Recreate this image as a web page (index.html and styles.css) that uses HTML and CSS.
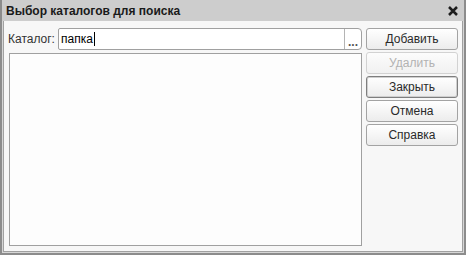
FILE: index.html
```html
<!DOCTYPE html>
<html lang="ru">
<head>
<meta charset="UTF-8">
<title>Выбор каталогов для поиска</title>
<link rel="stylesheet" href="styles.css">
</head>
<body>

<div class="window">
  <div class="titlebar">
    <span class="title">Выбор каталогов для поиска</span>
    <svg class="close" width="10" height="10" viewBox="0 0 10 10">
      <path d="M1 1 L9 9 M9 1 L1 9" stroke="#1e1e1e" stroke-width="2.5" fill="none"/>
    </svg>
  </div>
  <div class="body">
    <div class="main">
      <div class="row">
        <span class="label">Каталог:</span>
        <div class="field">
          <span class="value">папка<span class="caret"></span></span>
          <span class="choose">...</span>
        </div>
      </div>
      <div class="list"></div>
    </div>
    <div class="buttons">
      <div class="btn">Добавить</div>
      <div class="btn disabled">Удалить</div>
      <div class="btn default">Закрыть</div>
      <div class="btn">Отмена</div>
      <div class="btn">Справка</div>
    </div>
  </div>
</div>

</body>
</html>
```

FILE: styles.css
```css
body, html {
  margin: 0;
  padding: 0;
  font-family: 'Liberation Sans', Arial, sans-serif;
  font-size: 12px;
  color: #1e1e1e;
}

.window {
  width: 466px;
  height: 255px;
  box-sizing: border-box;
  border: 2px solid #8c8c8c;
  border-top: 0;
  background: #d6d6d6;
  display: flex;
  flex-direction: column;
}

.titlebar {
  height: 21px;
  flex: 0 0 21px;
  background: #cdcdcd;
  display: flex;
  align-items: center;
  justify-content: space-between;
  padding: 0 6px 0 4px;
}

.title {
  font-weight: bold;
  font-size: 12px;
  color: #1a1a1a;
}

.close {
  margin-top: 1px;
}

.body {
  flex: 1;
  margin: 0 1px 1px;
  border: 1px solid #a0a0a0;
  border-top: 0;
  background: #f7f7f7;
  display: flex;
  padding: 7px 4px 5px 5px;
  gap: 4px;
}

.main {
  flex: 1;
  display: flex;
  flex-direction: column;
  gap: 3px;
}

.row {
  display: flex;
  align-items: center;
  height: 22px;
}

.label {
  width: 50px;
  margin-left: -1px;
  color: #333;
}

.field {
  flex: 1;
  height: 22px;
  box-sizing: border-box;
  border: 1px solid #a0a0a0;
  border-radius: 2px 4px 4px 2px;
  background: #fff;
  display: flex;
  align-items: center;
}

.value {
  flex: 1;
  padding-left: 2px;
  display: flex;
  align-items: center;
  color: #000;
}

.caret {
  display: inline-block;
  width: 1px;
  height: 14px;
  background: #000;
  margin-left: 1px;
}

.choose {
  width: 16px;
  height: 20px;
  border-left: 1px solid #b4b4b4;
  text-align: center;
  line-height: 26px;
  font-weight: bold;
  color: #555;
}

.list {
  flex: 1;
  border: 1px solid #a0a0a0;
  background: #fdfdfd;
}

.buttons {
  width: 92px;
  display: flex;
  flex-direction: column;
  gap: 2px;
}

.btn {
  height: 22px;
  box-sizing: border-box;
  border: 1px solid #a3a3a3;
  border-radius: 3px;
  background: linear-gradient(#ffffff, #ececec);
  text-align: center;
  line-height: 20px;
  color: #2a2a2a;
}

.btn.disabled {
  border-color: #d2d2d2;
  background: linear-gradient(#fcfcfc, #f1f1f1);
  color: #b2b2b2;
}

.btn.default {
  border-color: #7e7e7e;
  box-shadow: inset 0 0 0 1px #cfcfcf;
}
```
